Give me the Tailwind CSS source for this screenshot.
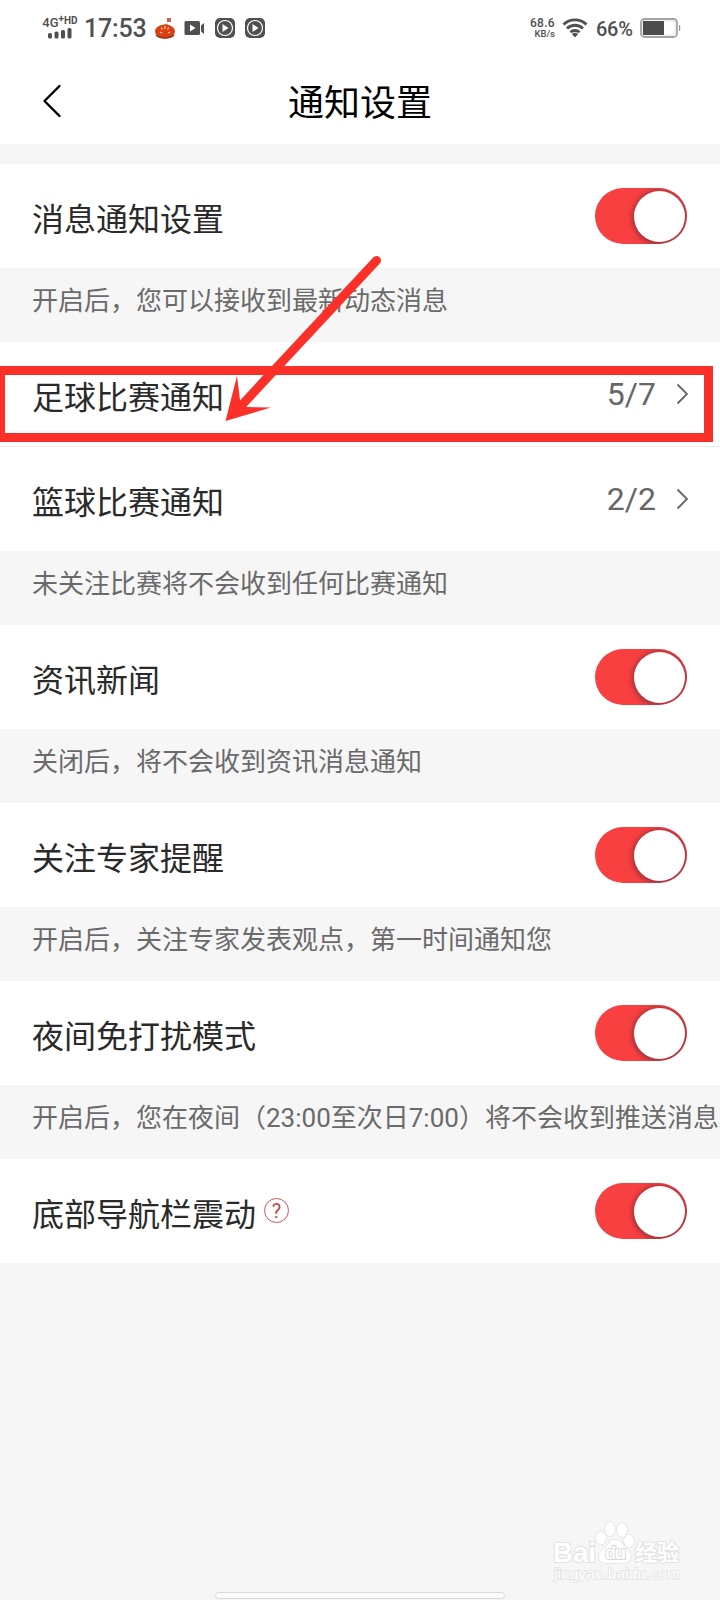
<!DOCTYPE html>
<html lang="zh-CN">
	<head>
		<meta charset="UTF-8" />
		<meta name="viewport" content="width=device-width, initial-scale=1.0" />
		<title>通知设置</title>
		<script src="https://cdn.jsdelivr.net/npm/@tailwindcss/browser@4"></script>
	</head>
	<body class="bg-[#f6f6f6]">
		<div
			class="relative flex flex-col w-[720px] h-[1600px] overflow-hidden font-[Roboto,'Noto_Sans_CJK_SC',sans-serif] text-[#2a2a2a]"
		>
			<!-- status bar -->
			<div class="flex items-center h-14 bg-white text-[#505050] pl-[41px] pr-10 shrink-0">
				<div class="flex flex-col items-center w-[38px]">
					<div class="flex items-start font-medium leading-none h-[11px] -mt-0.5">
						<span class="text-[13px]">4G</span>
						<span class="text-[10px] font-bold -mt-0.5">+</span>
						<span class="text-[10px] font-bold">HD</span>
					</div>
					<svg width="24" height="12" viewBox="0 0 24 12" fill="#505050">
						<rect x="0" y="6" width="4" height="5.5" rx="1.5" />
						<rect x="6.5" y="4.5" width="4" height="7" rx="1.5" />
						<rect x="13" y="3" width="4" height="8.5" rx="1.5" />
						<rect x="19.5" y="1" width="4" height="10.5" rx="1.5" />
					</svg>
				</div>
				<span class="ml-[5px] w-[63px] text-[25px] leading-none font-medium tracking-[-0.2px] whitespace-nowrap">17:53</span>
				<svg class="ml-[7px]" width="22" height="22" viewBox="0 0 22 22">
					<rect x="13" y="1" width="4" height="4" fill="#c9674f" />
					<path d="M10 8l4-1" stroke="#c9866a" stroke-width="1" />
					<ellipse cx="11" cy="14.5" rx="10" ry="7" fill="#dc3f12" />
					<path d="M2 18c4 4 14 4 18 0" fill="none" stroke="#8d3b1c" stroke-width="1.5" />
					<path d="M7 10.500l1.500 2M11 9v3M15 10.500l-1.500 2M6 15l2 1M16 15l-2 1" stroke="#ffd9a8" stroke-width="1.200" />
				</svg>
				<svg class="ml-[8px]" width="22" height="16" viewBox="0 0 22 16">
					<rect x="0.500" y="1" width="15.500" height="14" rx="1.500" fill="#505050" />
					<path d="M6 4.500v7l5.500-3.500z" fill="#fff" />
					<path d="M17 5.500l3-2.500v11l-3-2.500z" fill="#505050" />
				</svg>
				<svg class="ml-[8px]" width="22" height="22" viewBox="0 0 22 22">
					<rect x="1" y="1" width="20" height="20" rx="5" fill="#505050" />
					<circle cx="11" cy="11" r="7.500" fill="none" stroke="#fff" stroke-width="1.200" />
					<path d="M8.500 7v8l6-4z" fill="#fff" />
				</svg>
				<svg class="ml-[8px]" width="22" height="22" viewBox="0 0 22 22">
					<rect x="1" y="1" width="20" height="20" rx="5" fill="#505050" />
					<circle cx="11" cy="11" r="7.500" fill="none" stroke="#fff" stroke-width="1.200" />
					<path d="M8.500 7v8l6-4z" fill="#fff" />
				</svg>
				<div class="ml-auto flex items-center">
					<div class="w-[25px] text-right font-medium whitespace-nowrap">
						<div class="text-[12px] leading-[12px] tracking-[0.3px]">68.6</div>
						<div class="text-[9.5px] leading-[10px]">KB/s</div>
					</div>
					<svg class="ml-[7px]" width="26" height="20" viewBox="0 0 26 20" fill="none" stroke="#505050" stroke-width="2.800">
						<path d="M1.500 6.500a16.500 16.500 0 0 1 23 0" />
						<path d="M5 10.500a11.500 11.500 0 0 1 16 0" />
						<path d="M8.500 14.300a6.500 6.500 0 0 1 9 0" />
						<path d="M10 16.200a4.500 4.500 0 0 1 6 0l-3 3.200z" fill="#505050" stroke="none" />
					</svg>
					<span class="ml-[8px] w-[37px] text-[20px] leading-none font-medium tracking-[-0.3px] mt-0.5">66%</span>
					<svg class="ml-[7px] -mr-px" width="41" height="20" viewBox="0 0 41 20">
						<rect x="1" y="1" width="36" height="18" rx="3.500" fill="#fff" stroke="#a3a3a3" stroke-width="1.800" />
						<rect x="3" y="3" width="32" height="14" fill="none" stroke="#ddd" stroke-width="0.800" />
						<rect x="3" y="3" width="21" height="14" fill="#4c4c4c" />
						<rect x="39" y="7" width="1.200" height="6" fill="#999" />
					</svg>
				</div>
			</div>

			<!-- title bar -->
			<div class="relative flex items-center justify-center h-[88px] bg-white shrink-0">
				<svg class="absolute left-[41px] top-[28px]" width="22" height="34" viewBox="0 0 22 34" fill="none" stroke="#000" stroke-width="2.400">
					<path d="M18.500 2L3.500 17l15 15" stroke-linejoin="round" stroke-linecap="round" />
				</svg>
				<h1 class="text-[36px] leading-[52px] text-black pt-2">通知设置</h1>
			</div>

			<!-- settings list -->
			<div class="mt-5 shrink-0">
				<div class="flex items-center justify-between h-[104px] bg-white pl-8 pr-[33px]">
					<span class="text-[32px] leading-[48px] pt-2">消息通知设置</span>
					<div class="flex justify-end w-[92px] h-14 p-[2.5px] rounded-full bg-[#f84040] overflow-hidden">
						<div class="size-[51px] rounded-full bg-white shadow-[0_1px_5px_2px_rgba(90,40,60,0.55)]"></div>
					</div>
				</div>
				<p class="h-[74px] pl-8 pt-[13px] text-[26px] leading-[40px] text-[#6a6a6a] whitespace-nowrap">开启后，您可以接收到最新动态消息</p>

				<div class="flex items-center justify-between h-[105px] bg-white border-b border-[#ececec] pl-8 pr-[31px]">
					<span class="text-[32px] leading-[48px] pt-2">足球比赛通知</span>
					<div class="flex items-center text-[#666]">
						<span class="text-[32px] leading-none">5/7</span>
						<svg class="ml-5" width="13" height="22" viewBox="0 0 13 22" fill="none" stroke="#666" stroke-width="1.800">
							<path d="M1.500 1.500L11 11l-9.500 9.500" />
						</svg>
					</div>
				</div>
				<div class="flex items-center justify-between h-[104px] bg-white pl-8 pr-[31px]">
					<span class="text-[32px] leading-[48px] pt-2">篮球比赛通知</span>
					<div class="flex items-center text-[#666]">
						<span class="text-[32px] leading-none">2/2</span>
						<svg class="ml-5" width="13" height="22" viewBox="0 0 13 22" fill="none" stroke="#666" stroke-width="1.800">
							<path d="M1.500 1.500L11 11l-9.500 9.500" />
						</svg>
					</div>
				</div>
				<p class="h-[74px] pl-8 pt-[13px] text-[26px] leading-[40px] text-[#6a6a6a] whitespace-nowrap">未关注比赛将不会收到任何比赛通知</p>

				<div class="flex items-center justify-between h-[104px] bg-white pl-8 pr-[33px]">
					<span class="text-[32px] leading-[48px] pt-2">资讯新闻</span>
					<div class="flex justify-end w-[92px] h-14 p-[2.5px] rounded-full bg-[#f84040] overflow-hidden">
						<div class="size-[51px] rounded-full bg-white shadow-[0_1px_5px_2px_rgba(90,40,60,0.55)]"></div>
					</div>
				</div>
				<p class="h-[74px] pl-8 pt-[13px] text-[26px] leading-[40px] text-[#6a6a6a] whitespace-nowrap">关闭后，将不会收到资讯消息通知</p>

				<div class="flex items-center justify-between h-[104px] bg-white pl-8 pr-[33px]">
					<span class="text-[32px] leading-[48px] pt-2">关注专家提醒</span>
					<div class="flex justify-end w-[92px] h-14 p-[2.5px] rounded-full bg-[#f84040] overflow-hidden">
						<div class="size-[51px] rounded-full bg-white shadow-[0_1px_5px_2px_rgba(90,40,60,0.55)]"></div>
					</div>
				</div>
				<p class="h-[74px] pl-8 pt-[13px] text-[26px] leading-[40px] text-[#6a6a6a] whitespace-nowrap">开启后，关注专家发表观点，第一时间通知您</p>

				<div class="flex items-center justify-between h-[104px] bg-white pl-8 pr-[33px]">
					<span class="text-[32px] leading-[48px] pt-2">夜间免打扰模式</span>
					<div class="flex justify-end w-[92px] h-14 p-[2.5px] rounded-full bg-[#f84040] overflow-hidden">
						<div class="size-[51px] rounded-full bg-white shadow-[0_1px_5px_2px_rgba(90,40,60,0.55)]"></div>
					</div>
				</div>
				<p class="h-[74px] pl-8 pt-[13px] text-[26px] leading-[40px] text-[#6a6a6a] whitespace-nowrap">开启后，您在夜间（23:00至次日7:00）将不会收到推送消息</p>

				<div class="flex items-center justify-between h-[104px] bg-white pl-8 pr-[33px]">
					<div class="flex items-center">
						<span class="text-[32px] leading-[48px] pt-2">底部导航栏震动</span>
						<span class="flex items-center justify-center size-[25px] ml-2 -mt-px border-[1.5px] border-[#d0565a] rounded-full text-[20px] leading-none text-[#c4484c]">?</span>
					</div>
					<div class="flex justify-end w-[92px] h-14 p-[2.5px] rounded-full bg-[#f84040] overflow-hidden">
						<div class="size-[51px] rounded-full bg-white shadow-[0_1px_5px_2px_rgba(90,40,60,0.55)]"></div>
					</div>
				</div>
			</div>

			<!-- highlight box and arrow -->
			<div class="absolute left-[-4px] top-[366px] w-[717px] h-[76px] border-[9px] border-[#fb3029]"></div>
			<svg class="absolute left-[220px] top-[250px]" width="170" height="175" viewBox="220 250 170 175">
				<path d="M376.500 260.500L240 407" stroke="#fb3029" stroke-width="9" stroke-linecap="round" />
				<path d="M225.500 421L237 376L240 400L247 407L271 407.500z" fill="#fb3029" />
			</svg>

			<!-- watermark -->
			<svg class="absolute left-[545px] top-[1515px]" width="150" height="70" viewBox="0 0 150 70" fill="#fff" stroke="#e2e2e2" stroke-width="1.500" font-family="'Liberation Sans','Noto Sans CJK SC',sans-serif">
				<g paint-order="stroke" font-weight="bold">
					<text x="8" y="47" font-size="28" textLength="43" lengthAdjust="spacingAndGlyphs" stroke-width="2">Bai</text>
					<ellipse cx="56" cy="23" rx="5" ry="6.500" />
					<ellipse cx="65" cy="14" rx="5" ry="7" />
					<ellipse cx="77" cy="15" rx="5" ry="7" />
					<ellipse cx="84" cy="26" rx="5" ry="6.500" />
					<path d="M70 25c6 0 8 5 11 8s6 5 5 9-4 6-8 6H62c-5 0-8-2-8-6s3-6 6-9 4-8 10-8z" />
					<text x="60" y="44" font-size="19" textLength="21" stroke="#dadada" stroke-width="2">du</text>
					<text x="90" y="45" font-size="22" textLength="44" stroke-width="2">经验</text>
				</g>
				<text x="9" y="64" font-size="15" textLength="126" lengthAdjust="spacingAndGlyphs" paint-order="stroke">jingyan.baidu.com</text>
			</svg>

			<!-- gesture bar -->
			<div class="absolute left-[215px] top-[1592px] w-[290px] h-[7px] rounded-full bg-[#fbfbfb] border border-[#d8d8d8]"></div>
		</div>
	</body>
</html>
